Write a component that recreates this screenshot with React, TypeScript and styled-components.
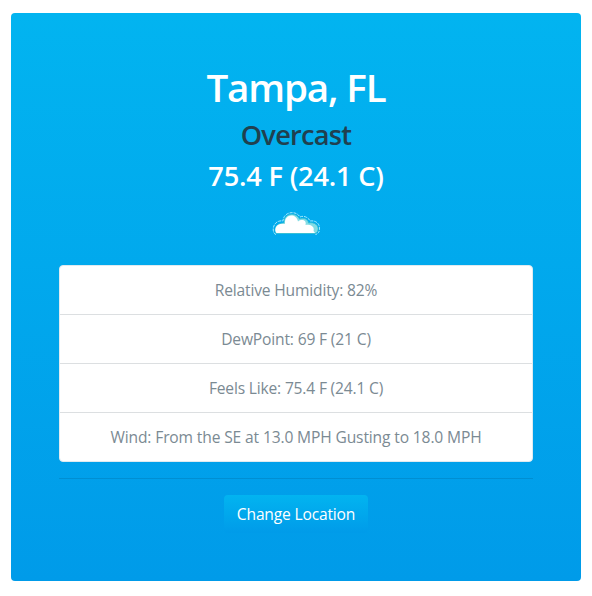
import React from "react";
import styled, { createGlobalStyle } from "styled-components";

const GlobalStyle = createGlobalStyle`
  * { box-sizing: border-box; }
  body {
    margin: 0;
    background: #fff;
    font-family: "Segoe UI", "Open Sans", "Noto Sans", sans-serif;
    font-size: 16px;
    line-height: 24px;
  }
`;

const Card = styled.main`
  width: 570px;
  height: 568px;
  margin: 13px 0 0 11px;
  padding: 50px 48px 0;
  border-radius: 4px;
  background: linear-gradient(#02b4f0, #009be9);
  text-align: center;
`;

const City = styled.h1<{ $spacing: number }>`
  margin: 0 0 7px;
  font-size: 38.6px;
  line-height: 48px;
  font-weight: 600;
  letter-spacing: ${(p) => p.$spacing}px;
  color: #fff;
`;

const Reading = styled.h3<{ $color: string; $spacing: number }>`
  margin: 0 0 7px;
  font-size: 27.2px;
  line-height: 34px;
  font-weight: 600;
  white-space: nowrap;
  letter-spacing: ${(p) => p.$spacing}px;
  color: ${(p) => p.$color};
`;

const CloudIcon = styled.svg`
  display: block;
  width: 50px;
  height: 50px;
  margin: 9px auto 13px;
`;

const Details = styled.ul`
  list-style: none;
  margin: 0;
  padding: 0;
  overflow: hidden;
  border: 1px solid #dfeaf0;
  border-radius: 4px;
  background: #fff;
`;

const Detail = styled.li<{ $spacing: number }>`
  height: 49px;
  padding: 12px 20px;
  font-size: 15.6px;
  color: #7b8a93;
  white-space: nowrap;
  letter-spacing: ${(p) => p.$spacing}px;
  &:not(:last-child) { border-bottom: 1px solid #dcdfe1; }
  &:last-child { height: 48px; }
`;

const Divider = styled.hr`
  height: 1px;
  margin: 16px 0;
  border: 0;
  background: rgba(0, 0, 0, 0.1);
`;

const ChangeButton = styled.button`
  display: block;
  width: 144px;
  height: 38px;
  margin: 0 auto;
  padding: 0 0 1px;
  border: 0;
  border-radius: 4px;
  background: linear-gradient(#02b4f0, #009be9);
  color: #fff;
  font: 400 15.6px/24px "Segoe UI", "Open Sans", "Noto Sans", sans-serif;
  letter-spacing: -0.18px;
  white-space: nowrap;
`;

const details = [
  { text: "Relative Humidity: 82%", spacing: -0.17 },
  { text: "DewPoint: 69 F (21 C)", spacing: -0.16 },
  { text: "Feels Like: 75.4 F (24.1 C)", spacing: -0.18 },
  { text: "Wind: From the SE at 13.0 MPH Gusting to 18.0 MPH", spacing: -0.14 },
];

export default function App() {
  return (
    <>
      <GlobalStyle />
      <Card>
        <City $spacing={-1.15}>Tampa, FL</City>
        <Reading $color="#20404f" $spacing={-0.75}>Overcast</Reading>
        <Reading $color="#fff" $spacing={-0.2}>75.4 F (24.1 C)</Reading>
        <CloudIcon viewBox="0 0 50 50" aria-label="Overcast">
          <path
            d="M5 32.5C1.500 31.500 1.500 25 4 22C6 19 10 18.500 12 19C12.500 9.500 25 8 29 15C33 13 38 16 39 19C46 18 49 23 48.500 27C48.500 30 47 32 44.500 32.500"
            fill="none" stroke="#b8f2ff" strokeWidth="0.9" strokeDasharray="3 1"
          />
          <path
            d="M5.500 31.500C3 29.500 3.500 21 13 21C12.500 11 25 9.500 28.500 17C33 15 37.500 18 37.500 21C44 19.500 48 24 47 28C46.500 30 45.500 31 44 31.500Z"
            fill="#83dce5" stroke="#35bed1" strokeWidth="0.8"
          />
          <path
            d="M5.500 31C2.500 27.500 5 20.500 14 22C13 12 25 10.500 27 19.500C31 16.500 36 18.500 34.500 23C40 21.500 44 25 42.500 29L44 31Z"
            fill="#fff"
          />
        </CloudIcon>
        <Details>
          {details.map((d) => (
            <Detail key={d.text} $spacing={d.spacing}>{d.text}</Detail>
          ))}
        </Details>
        <Divider />
        <ChangeButton type="button">Change Location</ChangeButton>
      </Card>
    </>
  );
}
